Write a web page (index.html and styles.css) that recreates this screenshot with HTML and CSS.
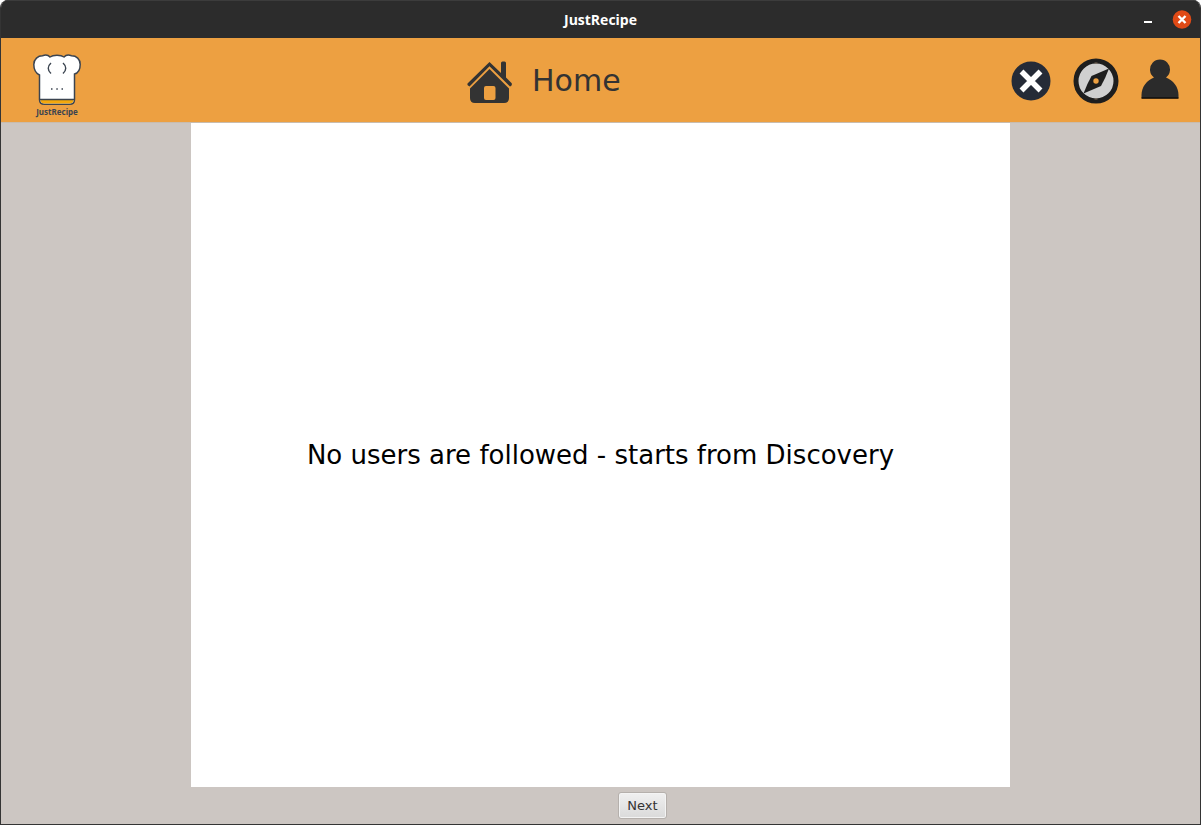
FILE: index.html
```html
<!DOCTYPE html>
<html lang="en">
<head>
<meta charset="utf-8">
<title>JustRecipe</title>
<link rel="stylesheet" href="styles.css">
</head>
<body>
<div class="window">
  <div class="titlebar">
    <span class="window-title">JustRecipe</span>
    <div class="window-controls">
      <button class="minimize" aria-label="Minimize"><svg width="8" height="8" viewBox="0 0 8 8"><path d="M0 3h8v2H0z" fill="#fff"/></svg></button>
      <button class="close" aria-label="Close"><svg width="20" height="20" viewBox="0 0 20 20"><circle cx="10" cy="9.500" r="9.300" fill="#e04a16"/><path d="M6.500 6l7 7M13.500 6l-7 7" stroke="#fff" stroke-width="2.400"/></svg></button>
    </div>
  </div>
  <header class="header">
    <div class="logo">
      <svg width="48" height="52" viewBox="0 0 48 52">
        <path d="M6.500 21C2.500 19 .8 15 .8 10.500C.8 5 5 1.800 9.500 1.800C12 .8 15 .8 17 3C20 .8 28 .8 31 3C33 .8 36 .8 38.500 1.800C43.500 1.800 47.200 5 47.200 10.500C47.200 15 45.500 19 41.500 20V45.500Q41.500 50.300 36.500 50.300H11.500Q6.500 50.300 6.500 45.500Z" fill="#fff" stroke="#3b4450" stroke-width="1.500"/>
        <path d="M7.200 45.500H40.800Q40.500 49.600 36.500 49.600H11.500Q7.500 49.600 7.200 45.500Z" fill="#f4a80c"/>
        <path d="M6.500 45.500H41.500M18 9Q12.500 14 18 19.500M30 9Q35.500 14 30 19.500" fill="none" stroke="#3b4450" stroke-width="1.400"/>
        <path d="M18 35h1.500M23.300 35h1.500M28.500 35h1.500" stroke="#3b4450" stroke-width="1.500"/>
      </svg>
      <span class="logo-text">JustRecipe</span>
    </div>
    <div class="page-heading">
      <svg width="46" height="48" viewBox="0 -4 46 48" fill="#333">
        <path d="M22.500 1L34 12V2q0-1.500 1.500-1.500h2Q39 .5 39 2v14.500l5.500 5.500q1 1.500-.5 3l-1 .5L22.500 5.300 2.500 25.500 1 24.500q-1.200-1.300 0-2.500Z"/>
        <path fill-rule="evenodd" d="M22.500 8L42 27.500V37q0 5-5 5H8q-5 0-5-5V27.500ZM19 25q-2 0-2 2v10q0 2 2 2h7.500q2 0 2-2V27q0-2-2-2Z"/>
      </svg>
      <h1>Home</h1>
    </div>
    <nav class="actions">
      <button aria-label="Log out"><svg width="40" height="40" viewBox="0 0 40 40"><circle cx="20" cy="20" r="19.500" fill="#252b37"/><path d="M10.500 10.500l19 19M29.500 10.500l-19 19" stroke="#fff" stroke-width="5.500"/></svg></button>
      <button aria-label="Discovery"><svg width="46" height="46" viewBox="0 0 46 46"><circle cx="23" cy="23" r="20" fill="#d0d0d0" stroke="#1e1e1e" stroke-width="5"/><path d="M36 10.500Q32.500 20 28 28L10.500 35.500Q14 26 18.500 18Z" fill="#1e1e1e"/><circle cx="23" cy="23" r="2.700" fill="#eda041"/><path d="M21.500 5h3M21.500 41h3" stroke="#7d6b58"/></svg></button>
      <button class="profile" aria-label="Profile"><svg width="38" height="42" viewBox="0 0 38 42"><path d="M13 19.500A10 10 0 1 1 25 19.500C32 22 37.500 29 37.500 37v3H.5v-3C.5 29 6 22 13 19.500Z" fill="#2b2b2b"/><path d="M.5 39.500h37v1.200H.5z" fill="#000"/></svg></button>
    </nav>
  </header>
  <main class="content">
    <section class="feed"><p>No users are followed - starts from Discovery</p></section>
  </main>
  <footer class="footer"><button class="next">Next</button></footer>
</div>
</body>
</html>
```
FILE: styles.css
```css
* { box-sizing: border-box; }
body { margin: 0; background: #fff; font-family: "DejaVu Sans", sans-serif; }
button { padding: 0; border: 0; background: none; }
svg { display: block; }
.window {
  display: flex;
  flex-direction: column;
  min-height: 100vh;
  border: 1px solid #343434;
  border-top: 0;
  border-radius: 8px 8px 0 0;
  background: #ccc6c2;
  overflow: hidden;
}
.titlebar {
  display: grid;
  grid-template-columns: 1fr auto 1fr;
  align-items: center;
  height: 38px;
  padding: 0 8px;
  background: #2c2c2c;
  border-top: 1px solid #3c3c3c;
}
.window-title {
  grid-column: 2;
  font: bold 14px "Open Sans", sans-serif;
  color: #fff;
}
.window-controls {
  display: flex;
  align-items: center;
  justify-content: flex-end;
  gap: 20px;
}
.minimize { padding-top: 4px; }
.header {
  display: grid;
  grid-template-columns: 466px 1fr auto;
  height: 85px;
  background: #eda041;
  border-bottom: 1px solid #c8bcae;
}
.logo {
  display: flex;
  flex-direction: column;
  align-items: center;
  width: 48px;
  margin: 16px 0 0 32px;
}
.logo-text {
  font: bold 8px/12px "Noto Sans", sans-serif;
  color: #3b4450;
}
.page-heading {
  display: flex;
  align-items: center;
  gap: 19px;
  padding-top: 2px;
}
h1 { margin: 0; font-size: 30px; font-weight: normal; line-height: 36px; color: #333; }
.actions {
  display: flex;
  align-items: center;
  gap: 22px;
  padding: 1px 21px 0 0;
}
.profile { padding-bottom: 4px; }
.content {
  flex: 1;
  display: flex;
  padding: 0 190px;
}
.feed {
  flex: 1;
  display: flex;
  align-items: center;
  justify-content: center;
  background: #fff;
}
.feed p { margin: 0; font-size: 26px; color: #000; }
.footer {
  display: flex;
  justify-content: center;
  padding: 5px 0 5px 84px;
}
.next {
  width: 49px;
  height: 27px;
  border: 1px solid #b5b0ac;
  border-radius: 3px;
  background: linear-gradient(#f0f0f0, #dadada);
  box-shadow: inset 0 0 0 1px #f4f4f4;
  font: 13px "DejaVu Sans", sans-serif;
  color: #333;
}
.footer { border-bottom: 1px solid #343434; }
.window { border-bottom: 0; }
```
